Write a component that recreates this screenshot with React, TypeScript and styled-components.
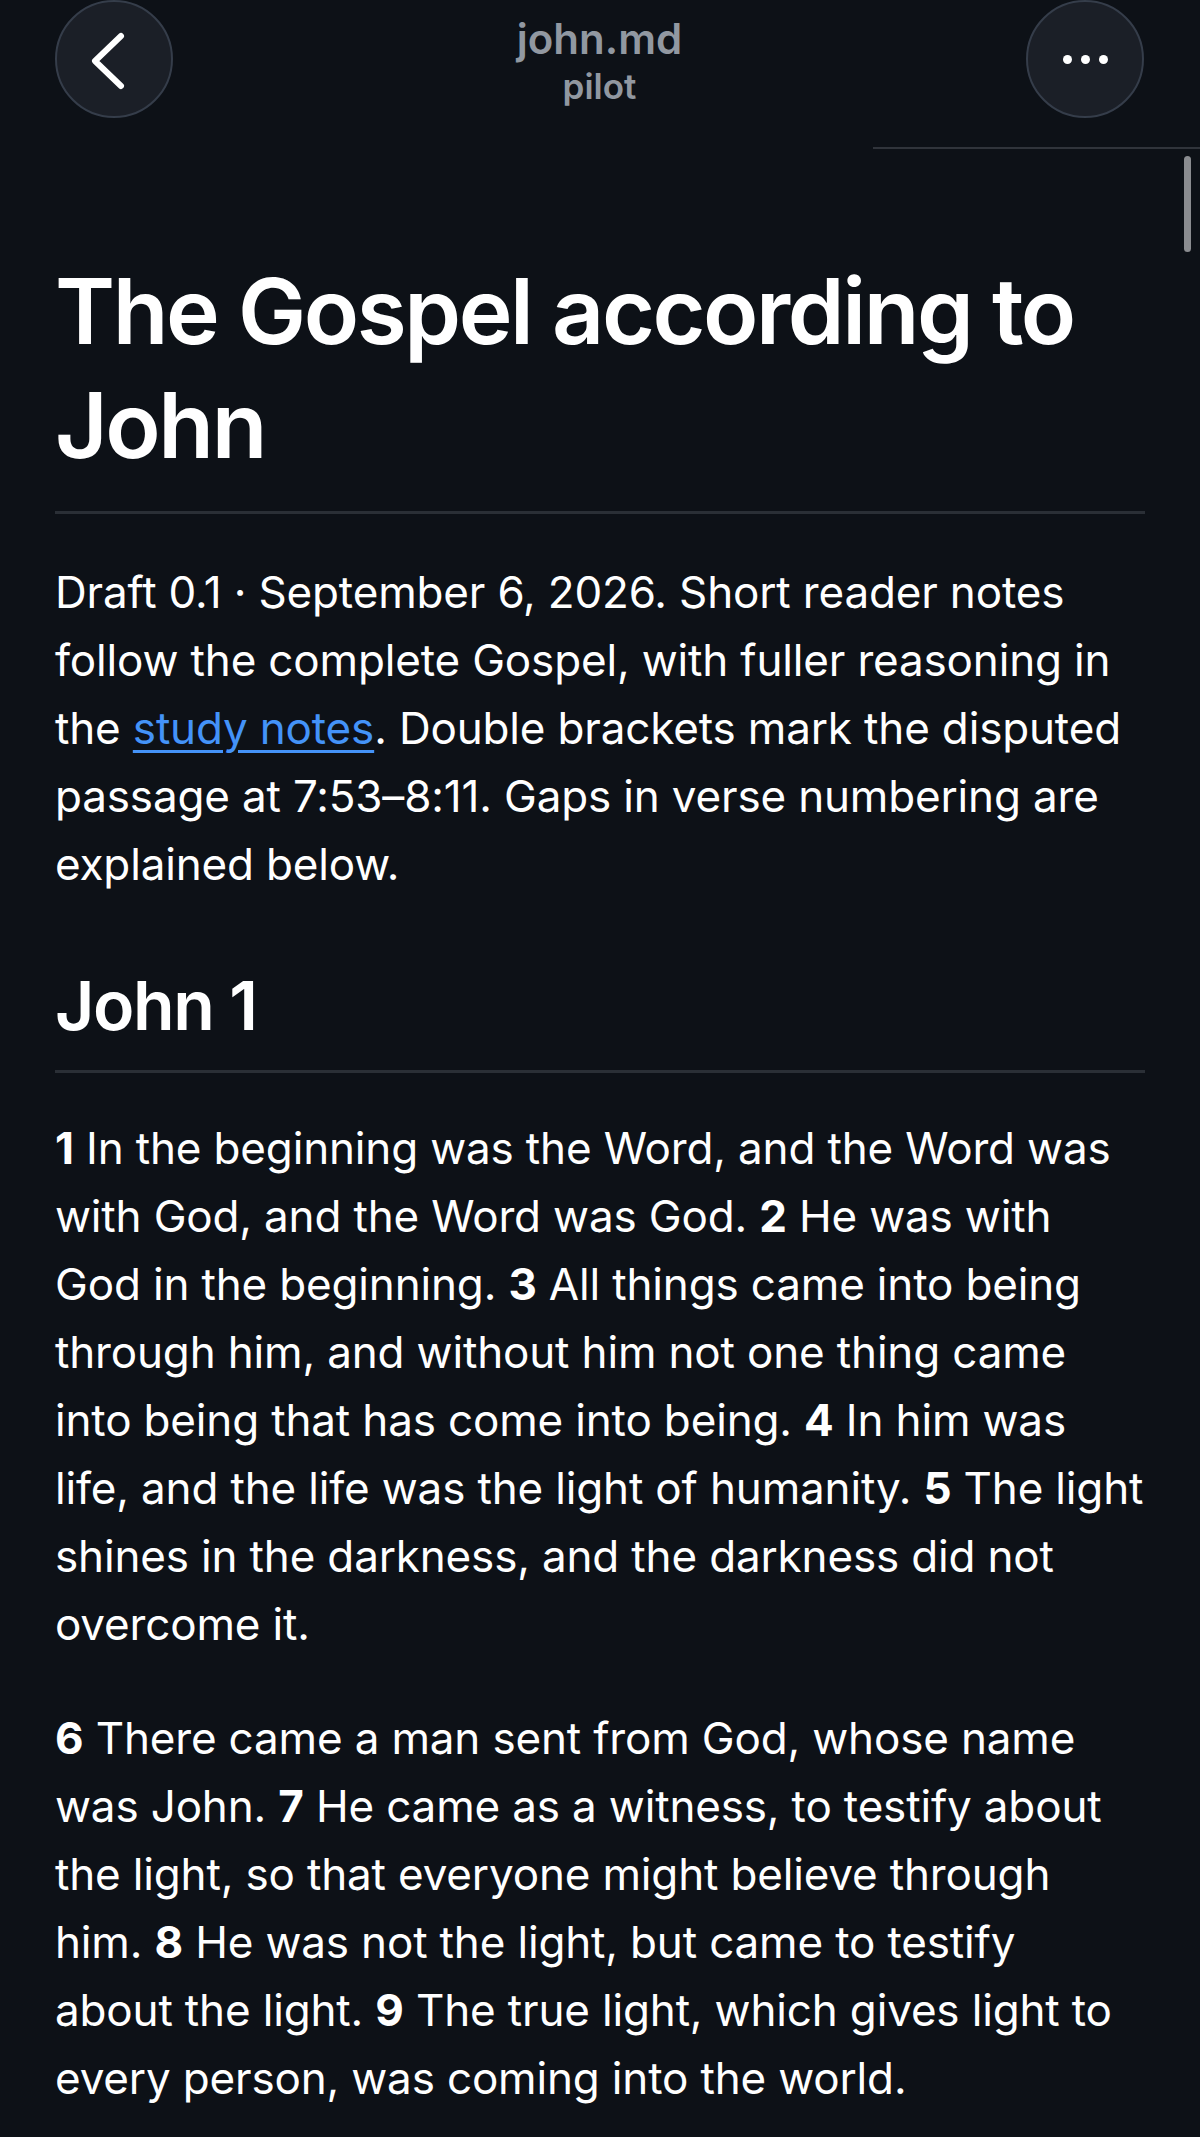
import React from 'react';
import styled, { createGlobalStyle } from 'styled-components';

const GlobalStyle = createGlobalStyle`
  html, body {
    margin: 0;
    padding: 0;
    background: #0d1117;
  }
  body {
    font-family: Inter, "Noto Sans", "Liberation Sans", sans-serif;
    color: #f0f6fc;
  }
`

const Page = styled.div`
  position: relative;
  width: 1200px;
  min-height: 2137px;
  background: #0d1117;
  overflow: hidden;
`

const Header = styled.header`
  display: flex;
  justify-content: space-between;
  align-items: flex-start;
  padding: 0 56px 0 55px;
  height: 118px;
`

const RoundButton = styled.button`
  box-sizing: border-box;
  width: 118px;
  height: 118px;
  border-radius: 50%;
  background: #1b1f27;
  border: 2px solid #353d4a;
  display: flex;
  align-items: center;
  justify-content: center;
  gap: 9px;
  padding: 0;
  cursor: pointer;
`

const Dot = styled.span`
  width: 9px;
  height: 9px;
  border-radius: 50%;
  background: #ffffff;
`

const TitleBlock = styled.div`
  display: flex;
  flex-direction: column;
  align-items: center;
  padding-top: 16px;
  color: #9198a1;
  font-weight: 600;
`

const FileName = styled.div`
  font-size: 42px;
  line-height: 46px;
`

const Branch = styled.div`
  font-size: 35px;
  line-height: 48px;
`

const HeaderRule = styled.div`
  height: 2px;
  margin: 29px 0 0 873px;
  background: #30343b;
`

const ScrollThumb = styled.div`
  position: absolute;
  top: 156px;
  left: 1184px;
  width: 7px;
  height: 96px;
  border-radius: 4px;
  background: #8a8c90;
`

const Article = styled.article`
  padding: 106px 55px 40px 55px;
`

const Title = styled.h1`
  margin: 0;
  font-size: 91px;
  line-height: 113.5px;
  font-weight: 600;
  letter-spacing: -2.4px;
  padding-bottom: 29px;
  border-bottom: 3px solid #2a2f36;
  color: #ffffff;
`

const Para = styled.p<{ $top?: number }>`
  margin: ${(p) => p.$top ?? 46}px 0 0 0;
  font-size: 44px;
  line-height: 68px;
  letter-spacing: -0.16px;
  color: #ffffff;
`

const Link = styled.a`
  color: #4493f8;
  text-decoration: underline;
  text-decoration-thickness: 3px;
  text-underline-offset: 6px;
`

const Chapter = styled.h2`
  margin: 65px 0 0 0;
  font-size: 68px;
  line-height: 85px;
  font-weight: 600;
  letter-spacing: -1.4px;
  padding-bottom: 22px;
  border-bottom: 3px solid #2a2f36;
  color: #ffffff;
`

const Verse = styled.b`
  font-weight: 700;
`

const Chevron = () => (
  <svg width="40" height="60" viewBox="0 0 40 60" style={{ overflow: 'visible', marginLeft: '-6px' }}>
    <path d="M30 7 L4 32 L30 57" fill="none" stroke="#ffffff" strokeWidth="6" strokeLinecap="round" strokeLinejoin="round" />
  </svg>
)

export default function App() {
  return (
    <Page>
      <GlobalStyle />
      <Header>
        <RoundButton aria-label="Back">
          <Chevron />
        </RoundButton>
        <TitleBlock>
          <FileName>john.md</FileName>
          <Branch>pilot</Branch>
        </TitleBlock>
        <RoundButton aria-label="More">
          <Dot />
          <Dot />
          <Dot />
        </RoundButton>
      </Header>
      <HeaderRule />
      <ScrollThumb />
      <Article>
        <Title>The Gospel according to John</Title>
        <Para $top={44}>
          Draft 0.1 · September 6, 2026. Short reader notes follow the complete Gospel, with fuller reasoning in the{' '}
          <Link href="#notes">study notes</Link>. Double brackets mark the disputed passage at 7:53–8:11. Gaps in verse
          numbering are explained below.
        </Para>
        <Chapter>John 1</Chapter>
        <Para $top={41}>
          <Verse>1</Verse> In the beginning was the Word, and the Word was with God, and the Word was God.{' '}
          <Verse>2</Verse> He was with God in the beginning. <Verse>3</Verse> All things came into being through him,
          and without him not one thing came into being that has come into being. <Verse>4</Verse> In him was life, and
          the life was the light of humanity. <Verse>5</Verse> The light shines in the darkness, and the darkness did
          not overcome it.
        </Para>
        <Para>
          <Verse>6</Verse> There came a man sent from God, whose name was John. <Verse>7</Verse> He came as a witness,
          to testify about the light, so that everyone might believe through him. <Verse>8</Verse> He was not the
          light, but came to testify about the light. <Verse>9</Verse> The true light, which gives light to every
          person, was coming into the world.
        </Para>
      </Article>
    </Page>
  );
}
